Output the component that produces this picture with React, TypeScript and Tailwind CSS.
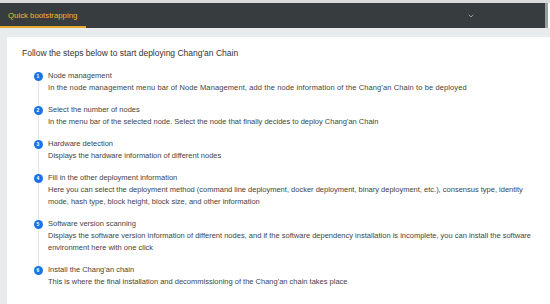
import { ChevronDown } from "lucide-react";

const steps = [
  {
    title: "Node management",
    desc: [
      "In the node management menu bar of Node Management, add the node information of the Chang'an Chain to be deployed",
    ],
    wide: true,
  },
  {
    title: "Select the number of nodes",
    desc: [
      "In the menu bar of the selected node. Select the node that finally decides to deploy Chang'an Chain",
    ],
  },
  {
    title: "Hardware detection",
    desc: ["Displays the hardware information of different nodes"],
  },
  {
    title: "Fill in the other deployment information",
    desc: [
      "Here you can select the deployment method (command line deployment, docker deployment, binary deployment, etc.), consensus type, identity",
      "mode, hash type, block height, block size, and other information",
    ],
  },
  {
    title: "Software version scanning",
    desc: [
      "Displays the software version information of different nodes, and if the software dependency installation is incomplete, you can install the software",
      "environment here with one click",
    ],
  },
  {
    title: "Install the Chang'an chain",
    desc: [
      "This is where the final installation and decommissioning of the Chang'an chain takes place",
    ],
  },
];

export default function App() {
  return (
    <div className="h-[304px] w-[550px] overflow-hidden bg-white font-['Liberation_Sans',Arial,sans-serif]">
      {/* top frame line */}
      <div className="h-[3px] bg-[#d9dbdc]" />

      {/* dark tab bar */}
      <div className="mr-[2px] flex h-[25px] items-stretch border-r-[3px] border-[#9aa0a2] bg-[#373d3e]">
        <div className="relative flex w-[86px] items-center whitespace-nowrap pl-[8px] text-[7.8px] text-[#f2b731]">
          Quick bootstrapping
          <div className="absolute bottom-0 left-0 right-0 h-[2px] bg-[#e7a92b]" />
        </div>
        <div className="flex flex-1 items-center justify-end pr-[70px] text-[#c9cccd]">
          <ChevronDown size={8} strokeWidth={2} />
        </div>
      </div>

      {/* page body */}
      <div className="flex h-[276px] flex-col bg-[#e9eced] pl-[7px] pt-[9px]">
        <div className="flex-1 bg-white pl-[15px] pt-[9px]">
          <h1 className="text-[8.5px] leading-[14px] text-[#333]">
            Follow the steps below to start deploying Chang'an Chain
          </h1>

          <ul className="mt-[10px] pl-[11px]">
            {steps.map((s, i) => (
              <li key={s.title} className="relative flex pb-[10px]">
                <div className="relative flex w-[10px] shrink-0 justify-center pt-[2px]">
                  <span className="z-10 flex h-[9px] w-[9px] items-center justify-center rounded-full bg-[#1a73e8] text-[5px] font-bold leading-none text-white">
                    {i + 1}
                  </span>
                  {i < steps.length - 1 && (
                    <span className="absolute bottom-[-12px] left-[4.5px] top-[8px] w-px bg-[#e4e6e8]" />
                  )}
                </div>
                <div className="ml-[5px] text-[7.5px] leading-[12px] text-[#444]">
                  <div>{s.title}</div>
                  {s.desc.map((d) => (
                    <div
                      key={d}
                      className={
                        s.wide
                          ? "whitespace-nowrap tracking-[0.11px]"
                          : "whitespace-nowrap"
                      }
                    >
                      {d}
                    </div>
                  ))}
                </div>
              </li>
            ))}
          </ul>
        </div>
        <div className="h-[4px] bg-white" />
      </div>
    </div>
  );
}
